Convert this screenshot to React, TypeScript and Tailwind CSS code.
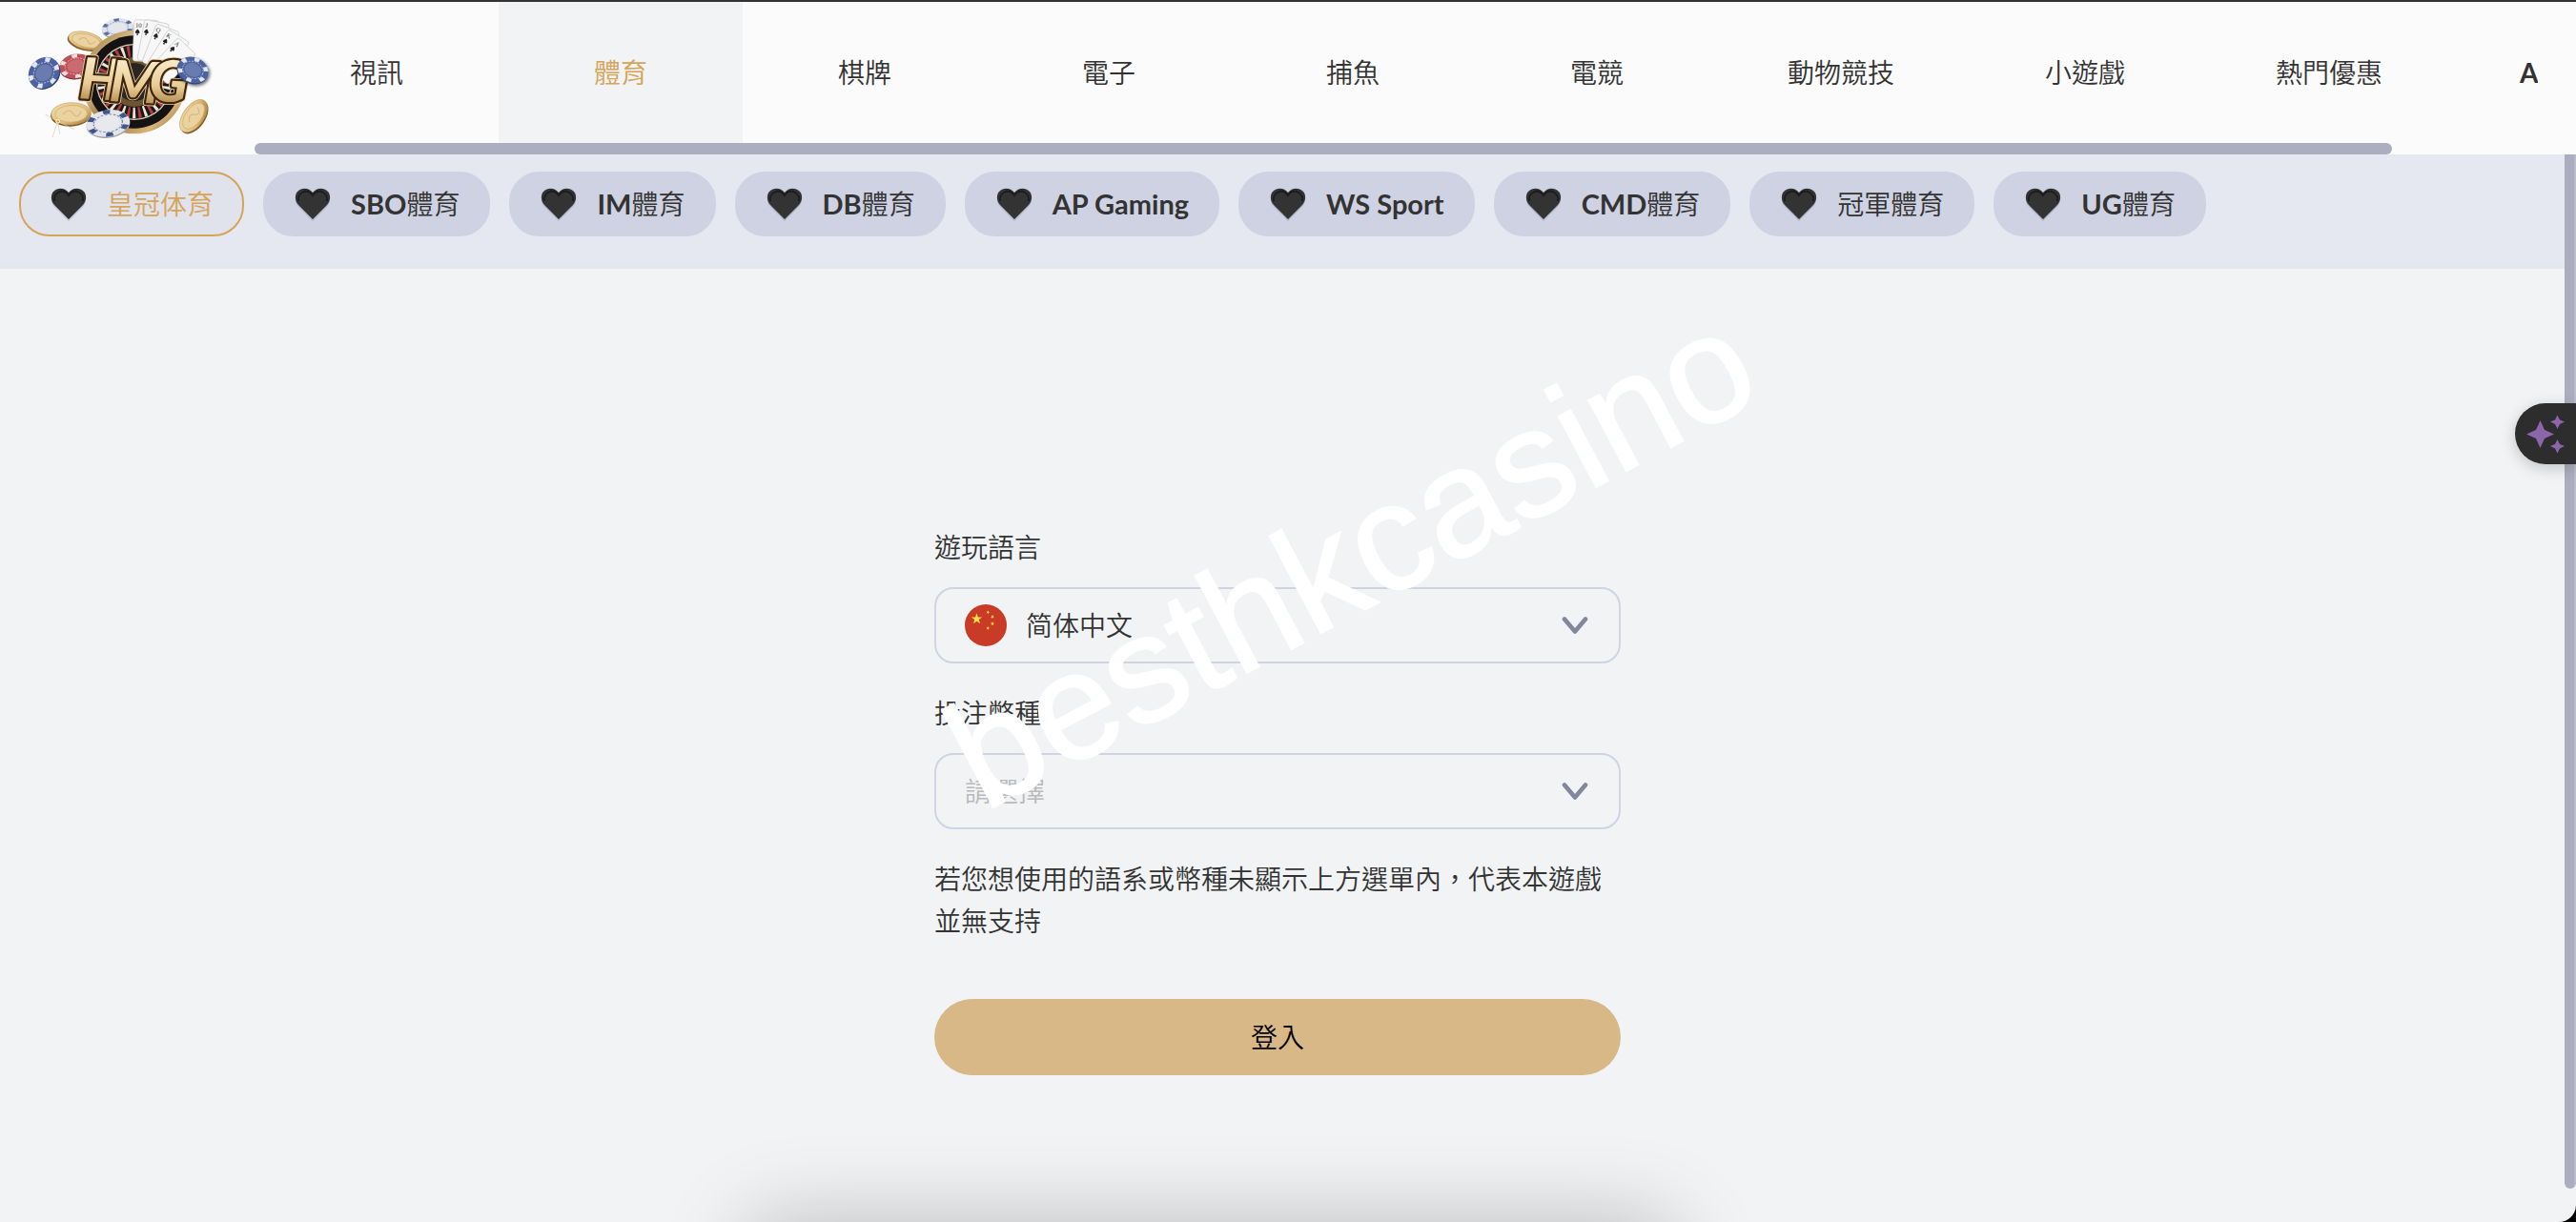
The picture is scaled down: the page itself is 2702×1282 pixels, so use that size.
import { useState } from 'react';
import clsx from 'clsx';

const NAV_TABS = ['視訊', '體育', '棋牌', '電子', '捕魚', '電競', '動物競技', '小遊戲', '熱門優惠'];

const PROVIDERS = [
  { latin: '', han: '皇冠体育' },
  { latin: 'SBO', han: '體育' },
  { latin: 'IM', han: '體育' },
  { latin: 'DB', han: '體育' },
  { latin: 'AP Gaming', han: '' },
  { latin: 'WS Sport', han: '' },
  { latin: 'CMD', han: '體育' },
  { latin: '', han: '冠軍體育' },
  { latin: 'UG', han: '體育' },
];

const WHEEL_SPOKES = Array.from({ length: 36 }, (_, i) => i * 10);
const CHIP_MARKS = [0, 60, 120, 180, 240, 300];

const CARDS = [
  { rank: '10', x: 362, y: 32, angle: 2 },
  { rank: 'J', x: 396, y: 31, angle: 11 },
  { rank: 'Q', x: 433, y: 44, angle: 21 },
  { rank: 'K', x: 470, y: 62, angle: 32 },
  { rank: 'A', x: 500, y: 88, angle: 43 },
];

function Chip({ x, y, rx, ry, angle, base, mark }: {
  x: number;
  y: number;
  rx: number;
  ry: number;
  angle: number;
  base: string;
  mark: string;
}) {
  return (
    <g transform={`translate(${x} ${y}) rotate(${angle}) scale(${rx / 50} ${ry / 50})`}>
      <circle cy="5" r="50" fill={base} />
      <circle cy="5" r="50" fill="#000" opacity="0.3" />
      <circle r="50" fill={base} />
      {CHIP_MARKS.map((a) => (
        <path key={a} d="M-9 -49 L9 -49 L7 -35 L-7 -35 Z" fill={mark} transform={`rotate(${a})`} />
      ))}
      <circle r="33" fill="none" stroke={mark} strokeWidth="2.5" strokeDasharray="6 4" opacity="0.8" />
      <circle r="27" fill="#fff" opacity="0.16" />
    </g>
  );
}

function Coin({ x, y, rx, ry, angle }: { x: number; y: number; rx: number; ry: number; angle: number }) {
  return (
    <g transform={`translate(${x} ${y}) rotate(${angle})`}>
      <ellipse cx="-2" cy="5" rx={rx} ry={ry} fill="#7d5a26" />
      <ellipse rx={rx} ry={ry} fill="url(#coin)" stroke="#b48c4c" strokeWidth="1.5" />
      <ellipse rx={rx * 0.8} ry={ry * 0.76} fill="#ead3a0" stroke="#cfaa68" strokeWidth="2" />
      <path
        d={`M${-rx * 0.4} 2 Q${-rx * 0.1} ${-ry * 0.6} ${rx * 0.1} 0 T${rx * 0.5} ${-ry * 0.2}`}
        fill="none"
        stroke="#d4b478"
        strokeWidth="3"
      />
    </g>
  );
}

function Logo() {
  return (
    <svg viewBox="0 0 630 435" className="h-[145px] w-[210px]" role="img" aria-label="HMG">
      <defs>
        <linearGradient id="coin" x1="0" y1="0" x2="1" y2="1">
          <stop offset="0" stopColor="#f3dfae" />
          <stop offset="0.6" stopColor="#dfbd7b" />
          <stop offset="1" stopColor="#9a7234" />
        </linearGradient>
        <linearGradient id="rim" x1="0" y1="0" x2="1" y2="1">
          <stop offset="0" stopColor="#8e6c3a" />
          <stop offset="0.3" stopColor="#e2c58d" />
          <stop offset="0.55" stopColor="#8b6a38" />
          <stop offset="0.8" stopColor="#d8b477" />
          <stop offset="1" stopColor="#7b5a2b" />
        </linearGradient>
        <linearGradient id="lettering" x1="0" y1="0" x2="0" y2="1">
          <stop offset="0.2" stopColor="#f8ebc8" />
          <stop offset="0.6" stopColor="#e8cb93" />
          <stop offset="0.9" stopColor="#a98046" />
        </linearGradient>
        <filter id="drop" x="-30%" y="-30%" width="160%" height="160%">
          <feDropShadow dx="5" dy="5" stdDeviation="4" floodOpacity="0.55" />
        </filter>
      </defs>

      <Coin x={211} y={98} rx={57} ry={27} angle={14} />
      <Chip x={310} y={58} rx={50} ry={30} angle={-8} base="#dfe2ea" mark="#5a6f9e" />
      <Chip x={180} y={178} rx={54} ry={38} angle={-10} base="#bf5058" mark="#f3dede" />

      <circle cx="362" cy="228" r="163" fill="url(#rim)" />
      <circle cx="362" cy="228" r="146" fill="#141213" />
      <circle cx="362" cy="228" r="120" fill="#d9cdb8" />
      <circle cx="362" cy="228" r="116" fill="#1b1819" />
      {WHEEL_SPOKES.map((a, i) => (
        <path
          key={a}
          d="M357 113 L367 113 L365 148 L359 148 Z"
          fill={i % 2 ? '#b63b3a' : '#ece5da'}
          transform={`rotate(${a} 362 228)`}
        />
      ))}
      <circle cx="362" cy="228" r="78" fill="#6f5430" />
      <circle cx="362" cy="228" r="60" fill="#2a2422" />

      {CARDS.map(({ rank, x, y, angle }) => (
        <g key={rank} transform={`translate(${x} ${y}) rotate(${angle})`}>
          <rect width="78" height="130" rx="8" fill="#f7f7f8" stroke="#c4c4c8" strokeWidth="2" />
          <text x="5" y="24" fontSize="20" fontFamily="Liberation Serif, serif" fill="#222">
            {rank}
          </text>
          <path d="M12 29 C22 38 20 44 13 42 L15 48 L9 48 L11 42 C4 44 2 38 12 29 Z" fill="#222" />
        </g>
      ))}

      <g
        fontFamily="Lato, sans-serif"
        fontWeight="900"
        fontStyle="italic"
        fontSize="180"
        strokeLinejoin="round"
        transform="rotate(3 362 220)"
      >
        <g fill="#3c2410" stroke="#e7cf9d" strokeWidth="18">
          <text x="190" y="289">H</text>
          <text x="286" y="292">M</text>
          <text x="410" y="284">G</text>
        </g>
        <g fill="url(#lettering)" stroke="#3c2410" strokeWidth="13" paintOrder="stroke">
          <text x="190" y="289">H</text>
          <text x="286" y="292">M</text>
          <text x="410" y="284">G</text>
        </g>
      </g>

      <g filter="url(#drop)">
        <Chip x={547} y={190} rx={50} ry={40} angle={22} base="#4d62a0" mark="#e4e7f0" />
      </g>
      <Chip x={78} y={199} rx={53} ry={45} angle={-48} base="#4d62a0" mark="#e4e7f0" />
      <Coin x={164} y={328} rx={63} ry={35} angle={-2} />
      <Coin x={549} y={335} rx={59} ry={33} angle={-54} />
      <Chip x={280} y={358} rx={69} ry={42} angle={-8} base="#e3e5ea" mark="#3f568c" />
      <path
        d="M122 352 L82 330 M122 352 L105 402 M122 352 L175 378 M122 352 L128 392"
        stroke="#d8c8b4"
        strokeWidth="2"
      />
      <circle cx="122" cy="352" r="7" fill="#fff4d8" />
      <circle cx="122" cy="352" r="4" fill="#ff9b2e" />
    </svg>
  );
}

function HeartIcon() {
  return (
    <svg viewBox="0 0 40 40" className="size-10 shrink-0" aria-hidden="true">
      <path
        d="M20 38 L5 23 C1 19 1 11 4 8 C9 3 16 4 20 10 C24 4 31 3 36 8 C39 11 39 19 35 23 Z"
        fill="#9da2bb"
        opacity="0.5"
      />
      <path
        d="M20 36 L5 21 C1 17 1 10 4 7 C9 2 16 3 20 8 C24 3 31 2 36 7 C39 10 39 17 35 21 Z"
        fill="#333"
      />
      <path
        d="M5 17 C3 9 14 2 20 11 C26 2 37 9 35 17"
        fill="none"
        stroke="#1d1d1d"
        strokeWidth="2"
      />
    </svg>
  );
}

function ChinaFlag() {
  const star = 'M0 -6 L1.4 -1.9 L5.7 -1.9 L2.3 0.7 L3.5 4.9 L0 2.4 L-3.5 4.9 L-2.3 0.7 L-5.7 -1.9 L-1.4 -1.9 Z';
  return (
    <svg viewBox="0 0 44 44" className="size-11" aria-hidden="true">
      <circle cx="22" cy="22" r="22" fill="#c93b26" />
      <g fill="#fadc4c">
        <path d={star} transform="translate(12.5 15.3)" />
        <path d={star} transform="translate(24.2 8.3) rotate(20) scale(0.36)" />
        <path d={star} transform="translate(29 13) rotate(40) scale(0.36)" />
        <path d={star} transform="translate(29 20.3) rotate(0) scale(0.36)" />
        <path d={star} transform="translate(24.2 25) rotate(20) scale(0.36)" />
      </g>
    </svg>
  );
}

function Chevron() {
  return (
    <svg
      viewBox="0 0 28 20"
      className="pointer-events-none absolute top-[30px] right-[34px] h-5 w-7"
      fill="none"
      stroke="#83879e"
      strokeWidth="4.6"
      strokeLinecap="round"
      strokeLinejoin="round"
      aria-hidden="true"
    >
      <path d="M3 3.5 L14 16.5 L25 3.5" />
    </svg>
  );
}

export default function App() {
  const [activeProvider, setActiveProvider] = useState(0);
  const [language, setLanguage] = useState('zh-CN');
  const [currency, setCurrency] = useState('');

  return (
    <div className="bg-black">
      <div
        className="relative flex min-h-screen flex-col overflow-hidden rounded-br-[18px] border-t-2 border-[#333] bg-[#f1f3f5]
                   font-[Lato,'Noto_Sans_CJK_TC',sans-serif] text-[28px] leading-[44px] font-[350] text-[#333]"
      >
        <header className="flex h-40 bg-[#fbfbfb]">
          <a href="#home" className="w-[267px] shrink-0 pt-2 pl-5">
            <Logo />
          </a>
          <div className="mr-10 min-w-0 flex-1 overflow-hidden">
            <nav className="flex h-[148px]">
              {NAV_TABS.map((tab) => (
                <a
                  key={tab}
                  href="#games"
                  className={clsx(
                    'flex w-64 shrink-0 items-center justify-center',
                    tab === '體育' && 'bg-[#f1f3f5] text-[#d6a458]'
                  )}
                >
                  {tab}
                </a>
              ))}
              <a href="#app" className="flex shrink-0 items-center pl-[72px] font-bold">
                A
              </a>
            </nav>
            <div className="h-3 w-[93.6%] rounded-full bg-[#adadc0]" />
          </div>
        </header>

        <div className="flex flex-1">
          <div className="min-w-0 flex-1">
            <div className="flex h-[120px] items-start gap-5 border-b-4 border-[#e5e7ec] bg-[#e5e8f0] px-5 pt-[18px]">
              {PROVIDERS.map(({ latin, han }, index) => (
                <button
                  key={latin + han}
                  onClick={() => setActiveProvider(index)}
                  className={clsx(
                    'flex h-[68px] shrink-0 items-center gap-5 rounded-4xl border-2 px-[30px]',
                    index === activeProvider
                      ? 'border-[#d6a458] bg-[#e0e2ec] text-[#d6a458]'
                      : 'border-[#cfd2e2] bg-[#cfd2e2]'
                  )}
                >
                  <HeartIcon />
                  <span>
                    {latin && <span className="text-[29px] font-bold">{latin}</span>}
                    {han}
                  </span>
                </button>
              ))}
            </div>

            <main className="flex justify-center pt-[270px] pr-[10px] pb-[154px]">
              <form className="relative w-[720px]" onSubmit={(e) => e.preventDefault()}>
                <label htmlFor="language" className="block">
                  遊玩語言
                </label>
                <div className="relative mt-5">
                  <span className="pointer-events-none absolute top-[18px] left-8">
                    <ChinaFlag />
                  </span>
                  <select
                    id="language"
                    value={language}
                    onChange={(e) => setLanguage(e.target.value)}
                    className="block h-20 w-full appearance-none rounded-[20px] border-2 border-[#cfd3e3] pr-20 pl-[94px]"
                  >
                    <option value="zh-CN">简体中文</option>
                  </select>
                  <Chevron />
                </div>

                <label htmlFor="currency" className="mt-[30px] block">
                  投注幣種
                </label>
                <div className="relative mt-5">
                  <select
                    id="currency"
                    value={currency}
                    onChange={(e) => setCurrency(e.target.value)}
                    className="block h-20 w-full appearance-none rounded-[20px] border-2 border-[#cfd3e3] pr-20 pl-[30px] text-[#b9b9b9]"
                  >
                    <option value="">請選擇</option>
                  </select>
                  <Chevron />
                </div>

                <p className="mt-[30px]">若您想使用的語系或幣種未顯示上方選單內，代表本遊戲並無支持</p>

                <button type="submit" className="mt-[60px] h-20 w-full rounded-full bg-[#d9b887] text-black">
                  登入
                </button>

                {/* watermark */}
                <span
                  className="pointer-events-none absolute top-[34px] left-[437px] -translate-x-1/2 -translate-y-1/2 -rotate-28
                             font-['Liberation_Sans',sans-serif] text-[159px] leading-none font-normal whitespace-nowrap
                             text-white [-webkit-text-stroke:2px_white]"
                >
                  besthkcasino
                </span>
              </form>
            </main>
          </div>

          <div className="flex w-3 shrink-0 pb-[35px]">
            <div className="flex-1 rounded-b-full border-r-2 border-[#b9bac9] bg-[#adadc0]" />
          </div>
        </div>

        <div className="absolute -bottom-[200px] left-[29%] h-[200px] w-[36%] rounded-3xl shadow-[0_0_90px_rgba(0,0,0,0.23)]" />

        <button
          aria-label="AI"
          className="absolute top-[421px] right-0 h-16 w-16 rounded-l-full bg-[#2d2d2d] shadow-[0_4px_16px_rgba(0,0,0,0.2)]"
        >
          <svg viewBox="0 0 64 64" className="size-16" fill="#8b66aa" aria-hidden="true">
            <path d="M26.5 18 L31 28 L41 32.5 L31 37 L26.5 47 L22 37 L12 32.5 L22 28 Z" />
            <path d="M44.5 12.5 L47 17.5 L52 19.5 L47 22 L44.5 27 L42 22 L37 19.5 L42 17.5 Z" />
            <path d="M44.5 38 L47 43 L52 45 L47 47.5 L44.5 52.5 L42 47.5 L37 45 L42 43 Z" />
          </svg>
        </button>
      </div>
    </div>
  );
}
